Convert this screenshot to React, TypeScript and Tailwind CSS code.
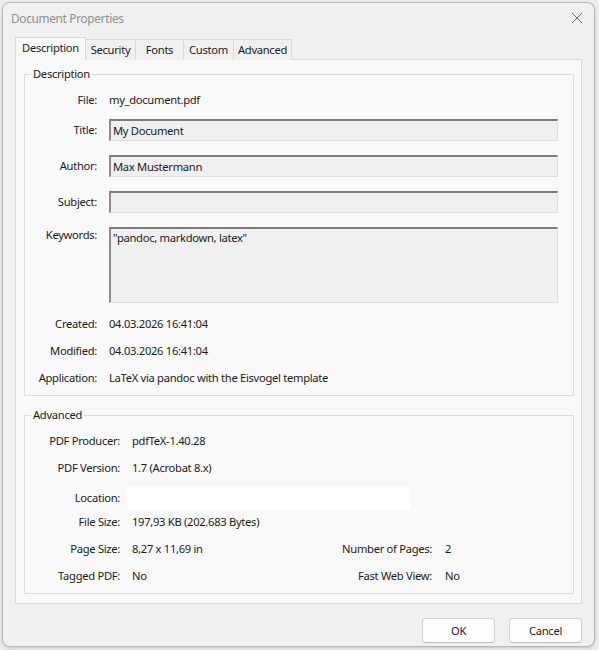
import React from 'react';

const font = { fontFamily: '"Noto Sans", "Open Sans", sans-serif' };

const tabs = ['Description', 'Security', 'Fonts', 'Custom', 'Advanced'];
const tabWidths: Record<string, string> = {
    Description: 'w-[71px]',
    Security: 'w-[50px]',
    Fonts: 'w-[48px]',
    Custom: 'w-[50px]',
    Advanced: 'w-[58px]',
};

const Label: React.FC<{ children: React.ReactNode, className?: string }> = ({ children, className = '' }) => (
    <div className={`text-right shrink-0 ${className}`}>{children}</div>
);

const Field: React.FC<{ value: string, tall?: boolean }> = ({ value, tall }) => (
    <div className={`w-[449px] bg-[#f0f0f0] border-t-2 border-l-2 border-t-[#7c7c7c] border-l-[#8c8c8c] border-r border-b border-r-[#dedede] border-b-[#dedede] pl-[2px] ${tall ? 'h-[76px] pt-[1px]' : 'h-[22px] flex items-center'}`}>
        {value}
    </div>
);

const App: React.FC = () => {
    return (
        <div className="w-[599px] h-[650px] bg-[#ececec] pt-[2px] pl-[2px] text-[11.2px] tracking-[-0.3px] leading-[16px] text-[#1b1b1b]" style={font}>
            <div className="w-[593px] h-[645px] rounded-[8px] border border-[#b9b9b9] bg-[#f0f0f0] shadow-[0_1px_3px_rgba(0,0,0,0.18)] overflow-hidden">
                {/* title bar */}
                <div className="h-[34px] flex items-center justify-between pl-[8px] pr-[10px] pb-[5px]">
                    <span className="text-[11.8px] text-[#8f8f8f]">Document Properties</span>
                    <svg width="12" height="12" viewBox="0 0 12 12" className="mr-[1px]">
                        <path d="M1 1 L11 11 M11 1 L1 11" stroke="#707070" strokeWidth="1" fill="none" />
                    </svg>
                </div>

                {/* tabs */}
                <div className="h-[23px] ml-[12px] flex items-end relative z-10">
                    {tabs.map((t, i) => (
                        <div
                            key={t}
                            className={`${tabWidths[t]} flex items-center justify-center border-t border-r border-[#d9d9d9] ${i === 0 ? 'h-[23px] bg-[#f9f9f9] border-l pb-[2px]' : 'h-[21px] bg-[#f0f0f0]'}`}
                        >
                            {t}
                        </div>
                    ))}
                </div>

                {/* panel */}
                <div className="ml-[12px] -mt-px w-[567px] h-[545px] bg-[#f9f9f9] border border-[#d9d9d9] pl-[8px] pt-[6px]">
                    <fieldset className="w-[550px] border border-[#dcdcdc] pb-[6px]">
                        <legend className="ml-[6px] px-[2px] leading-[16px]">Description</legend>
                        <div className="flex flex-col">
                            <div className="flex items-center h-[22px] mt-[7px]">
                                <Label className="w-[72px]">File:</Label>
                                <div className="ml-[12px]">my_document.pdf</div>
                            </div>
                            <div className="flex items-center mt-[8px]">
                                <Label className="w-[72px]">Title:</Label>
                                <div className="ml-[12px]"><Field value="My Document" /></div>
                            </div>
                            <div className="flex items-center mt-[14px]">
                                <Label className="w-[72px]">Author:</Label>
                                <div className="ml-[12px]"><Field value="Max Mustermann" /></div>
                            </div>
                            <div className="flex items-center mt-[14px]">
                                <Label className="w-[72px]">Subject:</Label>
                                <div className="ml-[12px]"><Field value="" /></div>
                            </div>
                            <div className="flex items-start mt-[14px]">
                                <Label className="w-[72px]">Keywords:</Label>
                                <div className="ml-[12px]"><Field value={'"pandoc, markdown, latex"'} tall /></div>
                            </div>
                            <div className="flex items-center h-[22px] mt-[10px]">
                                <Label className="w-[72px]">Created:</Label>
                                <div className="ml-[12px]">04.03.2026 16:41:04</div>
                            </div>
                            <div className="flex items-center h-[22px] mt-[5px]">
                                <Label className="w-[72px]">Modified:</Label>
                                <div className="ml-[12px]">04.03.2026 16:41:04</div>
                            </div>
                            <div className="flex items-center h-[22px] mt-[5px]">
                                <Label className="w-[72px]">Application:</Label>
                                <div className="ml-[12px]">LaTeX via pandoc with the Eisvogel template</div>
                            </div>
                        </div>
                    </fieldset>

                    <fieldset className="w-[550px] mt-[11px] border border-[#dcdcdc] pb-[6px]">
                        <legend className="ml-[6px] px-[2px] leading-[16px]">Advanced</legend>
                        <div className="flex flex-col">
                            <div className="flex items-center h-[22px] mt-[7px]">
                                <Label className="w-[95px]">PDF Producer:</Label>
                                <div className="ml-[12px]">pdfTeX-1.40.28</div>
                            </div>
                            <div className="flex items-center h-[22px] mt-[5px]">
                                <Label className="w-[95px]">PDF Version:</Label>
                                <div className="ml-[12px]">1.7 (Acrobat 8.x)</div>
                            </div>
                            <div className="flex items-center h-[22px] mt-[8px]">
                                <Label className="w-[95px]">Location:</Label>
                                <div className="ml-[7px] w-[283px] h-[22px] bg-white" />
                            </div>
                            <div className="flex items-center h-[22px] mt-[2px]">
                                <Label className="w-[95px]">File Size:</Label>
                                <div className="ml-[12px]">197,93 KB (202.683 Bytes)</div>
                            </div>
                            <div className="flex items-center h-[22px] mt-[5px]">
                                <Label className="w-[95px]">Page Size:</Label>
                                <div className="ml-[12px] w-[180px]">8,27 x 11,69 in</div>
                                <Label className="w-[120px]">Number of Pages:</Label>
                                <div className="ml-[13px]">2</div>
                            </div>
                            <div className="flex items-center h-[22px] mt-[5px]">
                                <Label className="w-[95px]">Tagged PDF:</Label>
                                <div className="ml-[12px] w-[180px]">No</div>
                                <Label className="w-[120px]">Fast Web View:</Label>
                                <div className="ml-[13px]">No</div>
                            </div>
                        </div>
                    </fieldset>
                </div>

                {/* buttons */}
                <div className="ml-[12px] w-[567px] flex justify-end gap-[14px] mt-[14px]">
                    <button className="w-[73px] h-[25px] rounded-[4px] bg-[#fdfdfd] border border-[#d0d0d0] border-b-[#bcbcbc]">OK</button>
                    <button className="w-[73px] h-[25px] rounded-[4px] bg-[#fdfdfd] border border-[#d0d0d0] border-b-[#bcbcbc]">Cancel</button>
                </div>
            </div>
        </div>
    );
};

export default App;
